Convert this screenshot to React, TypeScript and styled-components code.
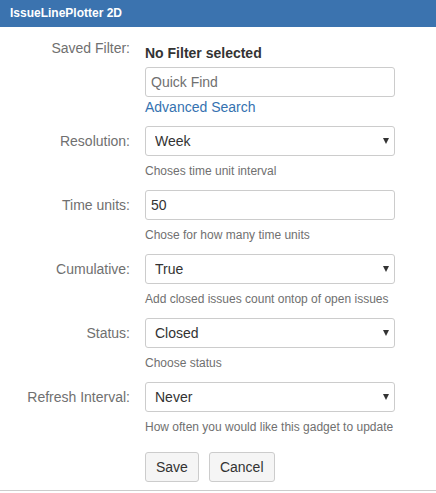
import React from "react";
import styled, { createGlobalStyle } from "styled-components";

const GlobalStyle = createGlobalStyle`
  html, body { margin: 0; padding: 0; background: #ffffff; }
  body { font-family: Arial, "Liberation Sans", Helvetica, sans-serif; color: #333333; }
  * { box-sizing: border-box; }
`;

const Gadget = styled.div`
  width: 436px;
  height: 491px;
  border-bottom: 1px solid #cccccc;
  background: #ffffff;
`;

const Header = styled.div`
  height: 27px;
  background: #3b73af;
  color: #ffffff;
  font-size: 12px;
  font-weight: bold;
  line-height: 27px;
  padding-left: 10px;
`;

const Form = styled.form`
  display: flex;
  flex-direction: column;
  padding-top: 6px;
`;

const Row = styled.div`
  display: grid;
  grid-template-columns: 130px 250px;
  column-gap: 15px;
  margin-bottom: 9px;
`;

const Label = styled.label`
  text-align: right;
  font-size: 14px;
  line-height: 20px;
  padding-top: 5px;
  color: #707070;
`;

const Field = styled.div<{ $pad?: number }>`
  display: flex;
  flex-direction: column;
  padding-top: ${(p) => p.$pad ?? 0}px;
`;

const Strong = styled.div`
  font-size: 14px;
  font-weight: bold;
  line-height: 20px;
  color: #333333;
`;

const TextInput = styled.input<{ $mt?: number }>`
  height: 30px;
  width: 250px;
  margin: ${(p) => p.$mt ?? 0}px 0 0 0;
  padding: 0 5px;
  border: 1px solid #cccccc;
  border-radius: 3px;
  font-family: Arial, "Liberation Sans", sans-serif;
  font-size: 14px;
  color: #333333;
  background: #ffffff;
  outline: none;
  &::placeholder { color: #707070; }
`;

const Link = styled.a`
  font-size: 14px;
  line-height: 20px;
  color: #3572b0;
  text-decoration: none;
`;

const SelectWrap = styled.div`
  position: relative;
  width: 250px;
  height: 30px;
`;

const Select = styled.select`
  appearance: none;
  -webkit-appearance: none;
  width: 250px;
  height: 30px;
  margin: 0;
  padding: 0 24px 0 9px;
  border: 1px solid #cccccc;
  border-radius: 3px;
  background: #ffffff;
  font-family: Arial, "Liberation Sans", sans-serif;
  font-size: 14px;
  color: #333333;
  outline: none;
`;

const Arrow = styled.span`
  position: absolute;
  right: 6px;
  top: 12px;
  width: 0;
  height: 0;
  border-left: 3.5px solid transparent;
  border-right: 3.5px solid transparent;
  border-top: 6px solid #333333;
  pointer-events: none;
`;

const Help = styled.div`
  margin-top: 7px;
  margin-bottom: 2px;
  font-size: 12px;
  line-height: 16px;
  color: #707070;
`;

const Buttons = styled.div`
  display: flex;
  gap: 10px;
  margin-left: 145px;
  margin-top: 6px;
`;

const Button = styled.button`
  height: 30px;
  padding: 0 10px;
  border: 1px solid #cccccc;
  border-radius: 3px;
  background: #f5f5f5;
  font-family: Arial, "Liberation Sans", sans-serif;
  font-size: 14px;
  color: #333333;
`;

type SelectRowProps = { label: string; value: string; options: string[]; help: string };

const SelectRow = ({ label, value, options, help }: SelectRowProps) => (
  <Row>
    <Label>{label}</Label>
    <Field>
      <SelectWrap>
        <Select defaultValue={value}>
          {options.map((o) => (
            <option key={o} value={o}>
              {o}
            </option>
          ))}
        </Select>
        <Arrow />
      </SelectWrap>
      <Help>{help}</Help>
    </Field>
  </Row>
);

export default function App() {
  return (
    <>
      <GlobalStyle />
      <Gadget>
        <Header>IssueLinePlotter 2D</Header>
        <Form onSubmit={(e) => e.preventDefault()}>
          <Row>
            <Label>Saved Filter:</Label>
            <Field $pad={10}>
              <Strong>No Filter selected</Strong>
              <TextInput $mt={4} placeholder="Quick Find" />
              <Link href="#">Advanced Search</Link>
            </Field>
          </Row>
          <SelectRow
            label="Resolution:"
            value="Week"
            options={["Day", "Week", "Month", "Quarter", "Year"]}
            help="Choses time unit interval"
          />
          <Row>
            <Label>Time units:</Label>
            <Field>
              <TextInput defaultValue="50" />
              <Help>Chose for how many time units</Help>
            </Field>
          </Row>
          <SelectRow
            label="Cumulative:"
            value="True"
            options={["True", "False"]}
            help="Add closed issues count ontop of open issues"
          />
          <SelectRow
            label="Status:"
            value="Closed"
            options={["Open", "In Progress", "Resolved", "Closed"]}
            help="Choose status"
          />
          <SelectRow
            label="Refresh Interval:"
            value="Never"
            options={["Never", "Every 15 Minutes", "Every 30 Minutes", "Every 1 Hour", "Every 2 Hours"]}
            help="How often you would like this gadget to update"
          />
          <Buttons>
            <Button type="submit">Save</Button>
            <Button type="button">Cancel</Button>
          </Buttons>
        </Form>
      </Gadget>
    </>
  );
}
